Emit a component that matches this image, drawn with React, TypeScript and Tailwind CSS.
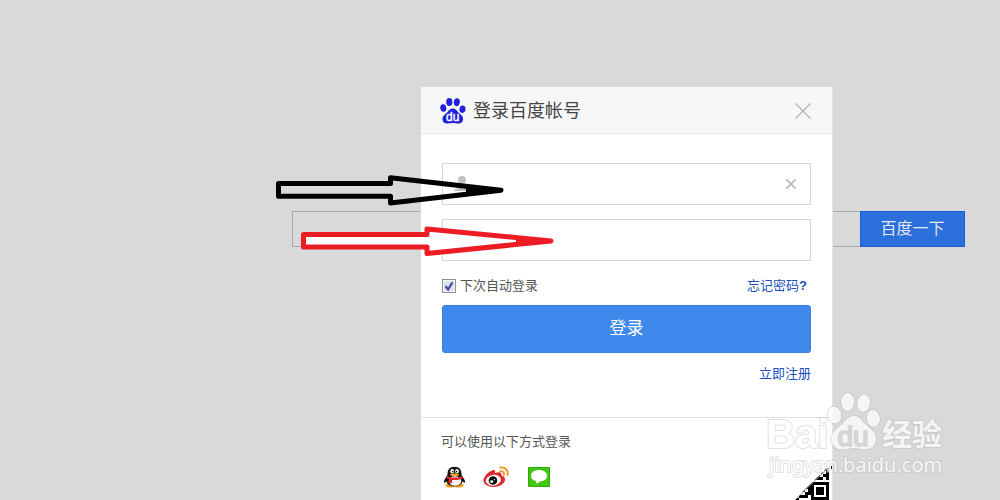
import { useState } from "react";

const qrCells = [
  [29, 2], [32, 2], [35, 0], [26, 5], [32, 5], [29, 8], [32, 8], [23, 8], [20, 11], [23, 11],
  [32, 11], [26, 11], [14, 17], [14, 20], [11, 20], [8, 23], [11, 26], [14, 26], [8, 29],
  [5, 29], [11, 29], [2, 32], [14, 23],
];

function PawLogo() {
  return (
    <svg width="26" height="26" viewBox="0 0 26 26" aria-hidden="true">
      <g fill="#1f1fe0">
        <ellipse cx="9.300" cy="4" rx="3.100" ry="4" />
        <ellipse cx="16.800" cy="4.200" rx="3" ry="4" transform="rotate(10 16.800 4.200)" />
        <ellipse cx="3.300" cy="10" rx="3" ry="3.800" transform="rotate(-12 3.300 10)" />
        <ellipse cx="22.500" cy="11.200" rx="3" ry="3.700" transform="rotate(8 22.500 11.200)" />
        <path d="M12.800 10.500c2.400 0 3.600 1.600 5 3.300 1.700 2 5.300 3.700 5.300 7.200 0 3-2.200 4.600-4.800 4.600-2 0-3.600-.6-5.500-.6s-3.600.6-5.500.6c-2.900 0-4.800-1.800-4.800-4.700 0-3.400 3.300-4.900 5.100-7 1.600-1.900 2.700-3.400 5.200-3.400Z" />
      </g>
      <text x="12.800" y="23" textAnchor="middle" fill="#fff" stroke="#fff" strokeWidth=".4" fontSize="12" fontFamily="Liberation Sans, sans-serif">du</text>
    </svg>
  );
}

function Cross({ size, color }: { size: number; color: string }) {
  return (
    <svg width={size} height={size} viewBox="0 0 16 16" stroke={color} aria-hidden="true">
      <path d="M.5.5l15 15M15.500.5l-15 15" strokeWidth={size > 12 ? 1.4 : 2.6} />
    </svg>
  );
}

function QQIcon() {
  return (
    <svg width="24" height="22" viewBox="0 0 24 22" aria-hidden="true">
      <ellipse cx="7.500" cy="19.300" rx="5" ry="2.300" fill="#f5a21b" />
      <ellipse cx="15.500" cy="19.300" rx="5" ry="2.300" fill="#f5a21b" />
      <path d="M11.500.8C7 .8 4.600 3.600 4.600 7.300c0 2-.9 3.200-2.400 5.200-1.300 1.800-1.600 4-.8 4.300.6.200 1.400-.6 2-1.500.8 3 3.900 5 8.100 5s7.300-2 8.100-5c.6.9 1.400 1.700 2 1.500.8-.3.500-2.500-.8-4.300-1.500-2-2.400-3.200-2.400-5.200 0-3.700-2.400-6.500-6.900-6.500Z" fill="#111" />
      <ellipse cx="12" cy="15" rx="6.300" ry="4.800" fill="#fff" />
      <ellipse cx="9.200" cy="5.300" rx="1.900" ry="2.300" fill="#fff" />
      <ellipse cx="14" cy="5.300" rx="1.900" ry="2.300" fill="#fff" />
      <circle cx="9.800" cy="5.600" r=".8" />
      <circle cx="13.500" cy="5.600" r=".8" />
      <ellipse cx="11.500" cy="8.800" rx="4.500" ry="1.200" fill="#f6a51c" />
      <path d="M4 10c4.500 2 10.500 2 15 0l.7 2.400c-3.400 1.600-7.500 2-10.500 1.500l-.3 3.500-3.200-.4.500-3.700c-1-.3-1.900-.5-2.700-1Z" fill="#e3262b" />
    </svg>
  );
}

function WeiboIcon() {
  return (
    <svg width="26" height="22" viewBox="0 0 26 22" aria-hidden="true">
      <path d="M9.500 4.200c2.200-.8 3.100.5 2.500 3 3.800-1.500 7-1.200 6.500 2.300 2.300.7 3.700 2 3.500 4.200-.4 4-5.300 7-11 7.200C5 21 .5 18.300.5 14.500c0-4 4.700-8.800 9-10.300Z" fill="#e2262d" />
      <ellipse cx="10.400" cy="14.300" rx="7.600" ry="5.400" transform="rotate(-8 10.400 14.300)" fill="#fff" />
      <circle cx="10" cy="14.500" r="4.300" fill="#111" />
      <ellipse cx="8.700" cy="15.600" rx="1.600" ry="1.300" fill="#fff" />
      <circle cx="11.500" cy="13.600" r=".7" fill="#fff" />
      <path d="M17.300 1.600c4.800-.8 8.200 2.600 7.200 7.400M17.300 5.200c2.500-.4 4.100 1.200 3.600 3.600" fill="none" stroke="#f39a26" strokeWidth="2" strokeLinecap="round" />
    </svg>
  );
}

function MessageIcon() {
  return (
    <svg width="22" height="20" viewBox="0 0 22 20" aria-hidden="true">
      <rect width="22" height="20" rx="1" fill="#2fa808" />
      <rect x="1" y="1" width="20" height="18" fill="#41c714" />
      <path d="M11 3c4.700 0 8 2.300 8 5.700S15.700 14.200 12 14.300c-.8 1-2.500 2.200-4.600 2.500.8-.8 1-1.800.9-2.700C5 13.500 3 11.500 3 8.700 3 5.300 6.300 3 11 3Z" fill="#fff" />
    </svg>
  );
}

function QrCorner() {
  return (
    <svg className="absolute right-0 bottom-0" width="38" height="34" viewBox="0 0 38 34" aria-hidden="true">
      {qrCells.map(([x, y]) => (
        <rect key={`${x}-${y}`} x={x} y={y} width="3" height="3" />
      ))}
      <rect x="17" y="16" width="18" height="18" />
      <rect x="20" y="19" width="12" height="12" fill="#fff" />
      <rect x="22" y="21" width="8" height="8" />
      <path d="M0 34L35 0H0Z" fill="#fff" />
      <path d="M1 34L36 0" stroke="#999" />
      <path d="M36 0V34" stroke="#fff" strokeWidth="2" />
    </svg>
  );
}

function Arrows() {
  return (
    <svg className="pointer-events-none absolute top-[170px] left-[270px]" width="300" height="100" viewBox="0 0 300 100" strokeWidth="5" strokeLinejoin="round" aria-hidden="true">
      <path d="M8.500 13.500H120.500V7.800L231 20.300 120.500 33V26.300H8.500Z" fill="none" stroke="#000" />
      <path d="M196 17L233 20.300 196 24Z" stroke="none" />
      <path d="M33.500 64.500H157V59L281 71 157 83.500V77H33.500Z" fill="#fff" stroke="#ed1c24" />
      <path d="M246 67.500L283 71 246 75Z" fill="#ed1c24" stroke="none" />
    </svg>
  );
}

function Watermark() {
  return (
    <svg className="pointer-events-none absolute top-[388px] left-[760px]" width="190" height="96" viewBox="0 0 190 96" fill="#fff" stroke="#bbb" strokeOpacity=".6" strokeWidth="2" strokeLinejoin="round" paintOrder="stroke" fontFamily="Liberation Sans, sans-serif" fontWeight="700">
      <g opacity=".75">
        <text x="6" y="60" fontSize="40">Bai</text>
        <ellipse cx="87.700" cy="14" rx="6.500" ry="9" />
        <ellipse cx="103.700" cy="15" rx="6.500" ry="8.700" transform="rotate(8 103.700 15)" />
        <ellipse cx="74.700" cy="27" rx="6.500" ry="8.500" transform="rotate(-10 74.700 27)" />
        <ellipse cx="113.300" cy="30.500" rx="6.500" ry="8.500" transform="rotate(-8 113.300 30.500)" />
        <path d="M94 28c5 0 7 3 9.500 6.500 4 5 12.500 8 12.500 16.500 0 7-5 10.500-10.500 10.500-4 0-7-1.500-11.500-1.500S86 61.500 82 61.500c-6 0-10.500-4-10.500-10.500 0-8 8-11.500 12-16.500C86.500 31 89 28 94 28Z" />
        <text x="93" y="58" fontSize="28" fontWeight="400" textAnchor="middle" fill="#d4d4d4" stroke="#bbb">du</text>
        <text x="122" y="57" fontSize="30" fontFamily="Noto Sans CJK SC, sans-serif">经验</text>
        <text x="9" y="84" fontSize="20" fontWeight="400" fontFamily="Noto Sans, sans-serif">jingyan.baidu.com</text>
      </g>
    </svg>
  );
}

function LoginDialog() {
  const [account, setAccount] = useState("");
  const [remember, setRemember] = useState(true);

  return (
    <section role="dialog" aria-labelledby="dialogTitle" className="absolute top-[87px] bottom-0 left-[421px] flex w-[412px] flex-col overflow-hidden border-r border-[#e4e4e4] bg-white">
      <header className="flex h-[47px] shrink-0 items-center border-b border-[#ebebeb] bg-[#f7f7f7] pt-[2px] pr-[21px] pl-[19px]">
        <PawLogo />
        <h1 id="dialogTitle" className="ml-[7px] flex-1 text-[18px] leading-6 text-[#444]">登录百度帐号</h1>
        <button type="button" aria-label="关闭">
          <Cross size={16} color="#b4b4b4" />
        </button>
      </header>

      <form className="flex shrink-0 flex-col px-[21px] pt-[29px]" onSubmit={(event) => event.preventDefault()}>
        <div className="flex h-[42px] items-center border border-[#d6d6d6] pr-[10px] pl-[11px]">
          <svg width="17" height="18" viewBox="0 0 17 18" fill="#c2c2c2" aria-hidden="true">
            <circle cx="8" cy="5" r="4" />
            <path d="M0 16c0-2 3-3 8-3s8 1 8 3Z" />
          </svg>
          <input
            aria-label="帐号"
            className="min-w-0 flex-1 px-2 text-sm focus:outline-none"
            value={account}
            onChange={(event) => setAccount(event.target.value)}
          />
          <button type="button" aria-label="清空" onClick={() => setAccount("")} className="pr-1">
            <Cross size={10} color="#b8b8b8" />
          </button>
        </div>
        <input type="password" aria-label="密码" className="mt-[14px] h-[42px] border border-[#d6d6d6] px-3 text-sm focus:outline-none" />

        <div className="mt-[15px] flex h-5 items-center justify-between text-[13px] leading-5">
          <label className="flex items-center gap-1 text-[#555]">
            <span className="grid">
              <input
                type="checkbox"
                checked={remember}
                onChange={(event) => setRemember(event.target.checked)}
                className="col-start-1 row-start-1 size-[14px] appearance-none border border-[#8e8f8f] bg-[#dfe2e8] shadow-[inset_0_0_0_1px_#f4f4f4]"
              />
              {remember && (
                <svg className="pointer-events-none col-start-1 row-start-1" width="14" height="14" viewBox="0 0 14 14" aria-hidden="true">
                  <path d="M3.500 7l2.600 3.500L10.500 3.300" fill="none" stroke="#3450a0" strokeWidth="2.200" />
                </svg>
              )}
            </span>
            下次自动登录
          </label>
          <a href="#forgot" className="pr-1 text-[#1b4fc0]">忘记密码<b>?</b></a>
        </div>

        <button type="submit" className="mt-[9px] h-12 rounded-[3px] border border-[#3a80e2] bg-[#3f89ec] text-[17px] leading-6 text-white">
          登录
        </button>
        <a href="#register" className="mt-[11px] self-end text-[13px] leading-5 text-[#1b4fc0]">立即注册</a>
      </form>

      <footer className="relative mt-[33px] flex-1 border-t border-[#e0e0e0] px-[20px] pt-[14px]">
        <p className="text-[13px] leading-5 text-[#555]">可以使用以下方式登录</p>
        <div className="mt-[14px] flex items-center gap-4 pl-[2px]">
          <a href="#qq" aria-label="QQ"><QQIcon /></a>
          <a href="#weibo" aria-label="微博"><WeiboIcon /></a>
          <a href="#message" aria-label="短信" className="pl-[3px]"><MessageIcon /></a>
        </div>
        <QrCorner />
      </footer>
    </section>
  );
}

export default function App() {
  return (
    <main className="relative min-h-screen overflow-hidden bg-[#d9d9d9] font-['Liberation_Sans','Noto_Sans_CJK_SC',sans-serif]">
      <form className="flex pt-[211px] pr-[35px] pl-[292px]" onSubmit={(event) => event.preventDefault()}>
        <input aria-label="搜索" className="h-9 min-w-0 flex-1 border border-r-0 border-[#aaa] px-2 focus:outline-none" />
        <button type="submit" className="h-9 w-[105px] border border-[#1a5edb] bg-[#2b70db] text-[16px] leading-6 text-[#e4e8f0]">
          百度一下
        </button>
      </form>
      <LoginDialog />
      <Arrows />
      <Watermark />
    </main>
  );
}
